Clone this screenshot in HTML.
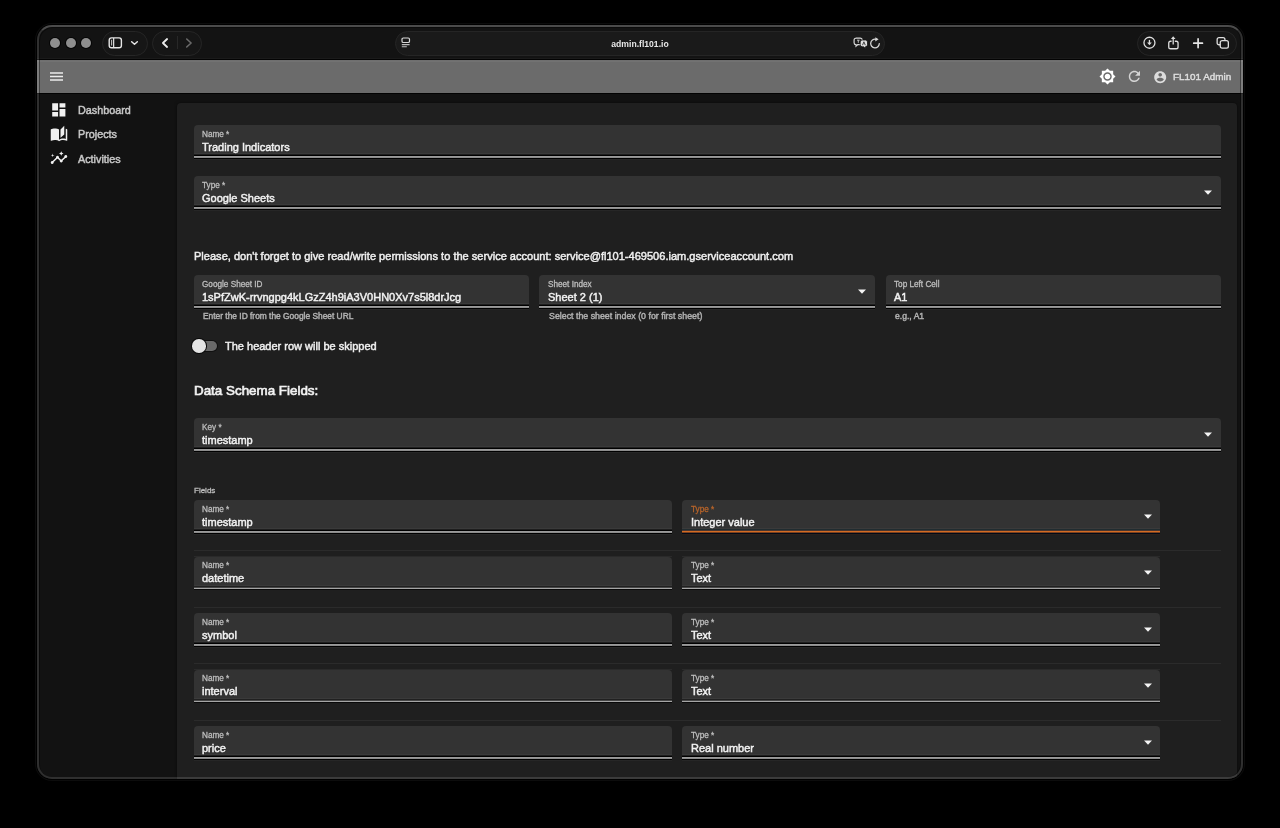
<!DOCTYPE html>
<html><head><meta charset="utf-8">
<style>
html,body{margin:0;padding:0;}
body{font-variant-ligatures:none;width:1280px;height:828px;background:#000;position:relative;overflow:hidden;font-family:"Liberation Sans",sans-serif;}
.t{position:absolute;white-space:nowrap;line-height:1;-webkit-text-stroke:0.45px currentColor;will-change:transform;}
.ic{position:absolute;display:block;}
.win{position:absolute;left:37px;top:25px;width:1206px;height:754px;border-radius:15px;background:#131313;overflow:hidden;box-shadow:0 0 0 1px #000,0 0 0 2px #0c0c0c;}
.winb{position:absolute;left:37px;top:25px;width:1206px;height:754px;border-radius:15px;box-sizing:border-box;border:2px solid rgba(255,255,255,0.125);border-top-color:rgba(255,255,255,0.24);box-shadow:inset 1px 1px 0 rgba(0,0,0,0.4),inset -1px 0 0 rgba(0,0,0,0.4);pointer-events:none;}
.abs{position:absolute;}
.inner{position:absolute;left:-37px;top:-25px;width:1280px;height:828px;}
.pill{position:absolute;box-sizing:border-box;border:1px solid #262626;background:#161616;border-radius:13px;}
.fld{position:absolute;height:30px;background:#333;border-radius:4px 4px 0 0;}
.ul{position:absolute;}
.div{position:absolute;height:1px;background:#2b2b2b;}
</style></head><body>
<div class="win"><div class="inner">
<div class="abs" style="left:37px;top:58px;width:1206px;height:1px;background:#1a1a1a"></div>
<div class="abs" style="left:37px;top:59px;width:1206px;height:1px;background:#030303"></div>
<div class="abs" style="left:50px;top:38px;width:10px;height:10px;border-radius:50%;background:#8e8e8e;box-shadow:0 0 0 1px #050505"></div>
<div class="abs" style="left:65.5px;top:38px;width:10px;height:10px;border-radius:50%;background:#8e8e8e;box-shadow:0 0 0 1px #050505"></div>
<div class="abs" style="left:81px;top:38px;width:10px;height:10px;border-radius:50%;background:#8e8e8e;box-shadow:0 0 0 1px #050505"></div>
<div class="pill" style="left:102px;top:31px;width:46px;height:25px;"></div>
<div class="pill" style="left:152px;top:31px;width:50px;height:25px;"></div>
<div class="pill" style="left:395px;top:31px;width:490px;height:25px;border-radius:12.5px;background:#1a1a1a;border-color:#252525"></div>
<div class="pill" style="left:1137px;top:31px;width:100px;height:25px;"></div>
<svg class="ic" style="left:107px;top:35px" width="16" height="14" viewBox="0 0 16 14"><rect x="2.2" y="2.9" width="12.2" height="9.8" rx="2.3" fill="none" stroke="#e6e6e6" stroke-width="1.4"/><path d="M6.65 2.9v9.8" stroke="#e6e6e6" stroke-width="1.2"/><path d="M4.65 4.8v5.7" stroke="#cfcfcf" stroke-width="1"/></svg>
<svg class="ic" style="left:129px;top:39px" width="10" height="8" viewBox="0 0 10 8"><path d="M2.65 2.75L5.5 5.3 8.35 2.75" fill="none" stroke="#e6e6e6" stroke-width="1.5" stroke-linecap="round" stroke-linejoin="round"/></svg>
<svg class="ic" style="left:158px;top:35px" width="14" height="16" viewBox="0 0 14 16"><path d="M9.1 4L4.9 8l4.2 4" fill="none" stroke="#ececec" stroke-width="1.8" stroke-linecap="round" stroke-linejoin="round"/></svg>
<div class="abs" style="left:177px;top:36px;width:1px;height:13px;background:#282828"></div>
<svg class="ic" style="left:182px;top:35px" width="14" height="16" viewBox="0 0 14 16"><path d="M4.7 4L9.1 8l-4.4 4" fill="none" stroke="#6a6a6a" stroke-width="1.6" stroke-linecap="round" stroke-linejoin="round"/></svg>
<svg class="ic" style="left:400px;top:37px" width="12" height="12" viewBox="0 0 12 12"><rect x="2" y="1" width="7.5" height="4.5" rx="1.3" fill="none" stroke="#d8d8d8" stroke-width="1.2"/><path d="M1.8 7.6h7.8M1.8 9.8h5" stroke="#bdbdbd" stroke-width="1.1"/></svg>
<div class="t" style="left:340.29999999999995px;width:600px;text-align:center;top:39.52px;font-size:8.6px;color:#e8e8e8;font-weight:700;-webkit-text-stroke:0;">admin.fl101.io</div>
<svg class="ic" style="left:853px;top:37px" width="15" height="12" viewBox="0 0 15 12"><path d="M3 1.1h4.2a2 2 0 0 1 2 2v2.6a2 2 0 0 1-2 2H4.6L3 9.2V7.7a2 2 0 0 1-1.9-2V3.1a2 2 0 0 1 2-2z" fill="none" stroke="#d6d6d6" stroke-width="1.2"/><path d="M4 3.2h2.6M5.3 3.2v2.6" stroke="#cfcfcf" stroke-width="0.9"/><path d="M9.2 3h3.3a2 2 0 0 1 2 2v2.8a2 2 0 0 1-2 2h-.2v1.6L10.6 9.8H9.2a2 2 0 0 1-2-2V5a2 2 0 0 1 2-2z" fill="#e0e0e0" stroke="#141414" stroke-width="0.8"/><path d="M9.5 8.2l1.4-3.4 1.4 3.4" fill="none" stroke="#333" stroke-width="0.9"/></svg>
<svg class="ic" style="left:870px;top:37px" width="11" height="12" viewBox="0 0 11 12"><path d="M9.3 6.6A4.3 4.3 0 1 1 5.8 2.3" fill="none" stroke="#d6d6d6" stroke-width="1.3" stroke-linecap="round"/><path d="M5.3 0.2l3.3 2.1-3.3 2.1z" fill="#d6d6d6"/></svg>
<svg class="ic" style="left:1142px;top:35.3px" width="15" height="15" viewBox="0 0 15 15"><circle cx="7.45" cy="7.75" r="5.5" fill="none" stroke="#dedede" stroke-width="1.3"/><path d="M7.45 4.9v3.6" stroke="#dedede" stroke-width="1.3"/><path d="M5.1 7.5h4.7L7.45 10.3z" fill="#dedede"/></svg>
<svg class="ic" style="left:1166px;top:33.5px" width="15" height="16" viewBox="0 0 15 16"><path d="M5.6 7.25H4.6a1.85 1.85 0 0 0-1.85 1.85v3.8a1.85 1.85 0 0 0 1.85 1.85h5.6a1.85 1.85 0 0 0 1.85-1.85V9.1a1.85 1.85 0 0 0-1.85-1.85H8.8" fill="none" stroke="#dedede" stroke-width="1.3"/><path d="M7.2 4.2v6.4" stroke="#dedede" stroke-width="1.3"/><path d="M4.9 5.1h4.6L7.2 2.3z" fill="#dedede"/></svg>
<svg class="ic" style="left:1192px;top:36.5px" width="12" height="12" viewBox="0 0 12 12"><path d="M6.1 1.9v8.7M1.75 6.15h8.7" stroke="#e4e4e4" stroke-width="1.7" stroke-linecap="round"/></svg>
<svg class="ic" style="left:1215px;top:35px" width="16" height="16" viewBox="0 0 16 16"><path d="M5.25 9.75H4a1.85 1.85 0 0 1-1.85-1.85V4.4A1.85 1.85 0 0 1 4 2.55h4.1a1.85 1.85 0 0 1 1.85 1.85v1.15" fill="none" stroke="#dedede" stroke-width="1.3"/><rect x="5.25" y="5.55" width="8.1" height="7.5" rx="1.85" fill="none" stroke="#dedede" stroke-width="1.3"/></svg>
<div class="abs" style="left:37px;top:60px;width:1206px;height:33px;background:#6b6b6b;box-shadow:inset 0 1px 0 #6f6f6f, inset 0 2px 0 #727272"></div>
<div class="abs" style="left:37px;top:93px;width:1206px;height:1px;background:#030303"></div>
<svg class="ic" style="left:48px;top:68px" width="16" height="16" viewBox="0 0 16 16"><path d="M2 5h13M2 8.6h13M2 12h13" stroke="#ececec" stroke-width="1.5"/></svg>
<svg class="ic" style="left:1099px;top:68px" width="17" height="17" viewBox="0 0 24 24"><path fill="#ffffff" d="M20 8.69V4h-4.69L12 .69 8.69 4H4v4.69L.69 12 4 15.31V20h4.69L12 23.31 15.31 20H20v-4.69L23.31 12 20 8.69zM12 18c-3.31 0-6-2.69-6-6s2.69-6 6-6 6 2.69 6 6-2.69 6-6 6zm0-10c-2.21 0-4 1.79-4 4s1.79 4 4 4 4-1.79 4-4-1.79-4-4-4z"/></svg>
<svg class="ic" style="left:1126.3px;top:68.2px" width="16.8" height="16.8" viewBox="0 0 24 24"><path fill="#d4d4d4" d="M17.65 6.35C16.2 4.9 14.21 4 12 4c-4.42 0-7.99 3.58-7.99 8s3.57 8 7.99 8c3.73 0 6.84-2.55 7.73-6h-2.08c-.82 2.33-3.04 4-5.65 4-3.31 0-6-2.69-6-6s2.69-6 6-6c1.66 0 3.14.69 4.22 1.78L13 11h7V4l-2.35 2.35z"/></svg>
<svg class="ic" style="left:1153px;top:69.5px" width="14.4" height="14.4" viewBox="0 0 24 24"><path fill="#dcdcdc" d="M12 2C6.48 2 2 6.48 2 12s4.48 10 10 10 10-4.48 10-10S17.52 2 12 2zm0 3c1.66 0 3 1.34 3 3s-1.34 3-3 3-3-1.34-3-3 1.34-3 3-3zm0 14.2c-2.5 0-4.71-1.28-6-3.22.03-1.99 4-3.08 6-3.08 1.99 0 5.97 1.09 6 3.08-1.29 1.94-3.5 3.22-6 3.22z"/></svg>
<div class="t" style="left:1172.6px;top:71.62px;font-size:9.9px;color:#dedede;font-weight:400;-webkit-text-stroke:0.45px #dedede;">FL101 Admin</div>
<div class="abs" style="left:37px;top:94px;width:1206px;height:700px;background:#121212"></div>
<svg class="ic" style="left:50px;top:101.2px" width="17.6" height="17.6" viewBox="0 0 24 24"><path fill="#f0f0f0" d="M3 13h8V3H3v10zm0 8h8v-6H3v6zm10 0h8V11h-8v10zm0-18v6h8V3h-8z"/></svg>
<svg class="ic" style="left:49.5px;top:125px" width="18" height="18" viewBox="0 0 24 24"><path fill="#f0f0f0" d="M19 1l-5 5v11l5-4.5V1zM1 6v14.65c0 .25.25.5.5.5.1 0 .15-.05.25-.05C3.1 20.45 5.05 20 6.5 20c1.95 0 4.05.4 5.5 1.5V6c-1.45-1.1-3.55-1.5-5.5-1.5S2.45 4.9 1 6zm22 13.5V6c-.6-.45-1.25-.75-2-1v13.5c-1.1-.35-2.3-.5-3.5-.5-1.7 0-4.150.65-5.5 1.5v2c1.35-.85 3.8-1.5 5.5-1.5 1.65 0 3.35.3 4.75 1.05.1.05.15.05.25.05.25 0 .5-.25.5-.5v-1.1z"/></svg>
<svg class="ic" style="left:49.5px;top:148.5px" width="18" height="18" viewBox="0 0 24 24"><path fill="#f0f0f0" d="M21 8c-1.45 0-2.26 1.44-1.930 2.51l-3.55 3.56c-.3-.09-.74-.09-1.04 0l-2.55-2.55C12.27 10.45 11.46 9 10 9c-1.45 0-2.27 1.44-1.93 2.52l-4.56 4.55C2.44 15.74 1 16.55 1 18c0 1.1.9 2 2 2 1.45 0 2.26-1.440 1.93-2.51l4.55-4.56c.3.09.74.09 1.04 0l2.55 2.55C12.73 16.55 13.54 18 15 18c1.45 0 2.27-1.44 1.93-2.52l3.56-3.55c1.07.33 2.51-.48 2.51-1.93 0-1.1-.9-2-2-2zM15 9l.94-2.07L18 6l-2.06-.93L15 3l-.92 2.07L12 6l2.08.93zM3.5 11L4 9l2-.5L4 8l-.5-2L3 8l-2 .5L3 9z"/></svg>
<div class="t" style="left:77.5px;top:104.86px;font-size:10.8px;color:#c8c8c8;font-weight:400;">Dashboard</div>
<div class="t" style="left:77.5px;top:129.16px;font-size:10.8px;color:#c8c8c8;font-weight:400;">Projects</div>
<div class="t" style="left:77.5px;top:153.56px;font-size:10.8px;color:#c8c8c8;font-weight:400;">Activities</div>
<div class="abs" style="left:177px;top:103px;width:1060px;height:700px;background:#1f1f1f;border-radius:4px;box-shadow:0 0 3px rgba(0,0,0,0.55)"></div>
<div class="fld" style="left:193.5px;top:125px;width:1027.5px"></div>
<div class="ul" style="left:193.5px;top:153px;width:1027.5px;background:#3a3a3a;height:1px"></div>
<div class="ul" style="left:193.5px;top:154px;width:1027.5px;background:#1e1e1e;height:1px"></div>
<div class="ul" style="left:193.5px;top:155px;width:1027.5px;background:#000;height:1px"></div>
<div class="ul" style="left:193.5px;top:156px;width:1027.5px;background:#9a9a9a;height:1px"></div>
<div class="ul" style="left:193.5px;top:157px;width:1027.5px;background:#8c8c8c;height:1px"></div>
<div class="ul" style="left:193.5px;top:158px;width:1027.5px;background:#000;height:1px"></div>
<div class="ul" style="left:193.5px;top:159px;width:1027.5px;background:#262626;height:1px"></div>
<div class="t" style="left:202.0px;top:130.81px;font-size:8.2px;color:#bdbdbd;font-weight:400;-webkit-text-stroke:0.3px #bdbdbd;">Name *</div>
<div class="t" style="left:202.0px;top:141.79px;font-size:11px;color:#f2f2f2;font-weight:400;">Trading Indicators</div>
<div class="fld" style="left:193.5px;top:176px;width:1027.5px"></div>
<div class="ul" style="left:193.5px;top:204px;width:1027.5px;background:#3a3a3a;height:1px"></div>
<div class="ul" style="left:193.5px;top:205px;width:1027.5px;background:#1e1e1e;height:1px"></div>
<div class="ul" style="left:193.5px;top:206px;width:1027.5px;background:#000;height:1px"></div>
<div class="ul" style="left:193.5px;top:207px;width:1027.5px;background:#9a9a9a;height:1px"></div>
<div class="ul" style="left:193.5px;top:208px;width:1027.5px;background:#8c8c8c;height:1px"></div>
<div class="ul" style="left:193.5px;top:209px;width:1027.5px;background:#000;height:1px"></div>
<div class="ul" style="left:193.5px;top:210px;width:1027.5px;background:#262626;height:1px"></div>
<div class="t" style="left:202.0px;top:181.81px;font-size:8.2px;color:#bdbdbd;font-weight:400;-webkit-text-stroke:0.3px #bdbdbd;">Type *</div>
<div class="t" style="left:202.0px;top:192.79px;font-size:11px;color:#f2f2f2;font-weight:400;">Google Sheets</div>
<svg class="ic" style="left:1204px;top:189.5px" width="8" height="5" viewBox="0 0 8 5"><path d="M0 0.5h8L4 4.8z" fill="#f4f4f4"/></svg>
<div class="t" style="left:193.75px;top:250.69px;font-size:11px;color:#f0f0f0;font-weight:400;font-size:11.05px">Please, don't forget to give read/write permissions to the service account: service@fl101-469506.iam.gserviceaccount.com</div>
<div class="fld" style="left:193.5px;top:275px;width:335.5px"></div>
<div class="ul" style="left:193.5px;top:303px;width:335.5px;background:#3a3a3a;height:1px"></div>
<div class="ul" style="left:193.5px;top:304px;width:335.5px;background:#1e1e1e;height:1px"></div>
<div class="ul" style="left:193.5px;top:305px;width:335.5px;background:#000;height:1px"></div>
<div class="ul" style="left:193.5px;top:306px;width:335.5px;background:#9a9a9a;height:1px"></div>
<div class="ul" style="left:193.5px;top:307px;width:335.5px;background:#8c8c8c;height:1px"></div>
<div class="ul" style="left:193.5px;top:308px;width:335.5px;background:#000;height:1px"></div>
<div class="ul" style="left:193.5px;top:309px;width:335.5px;background:#262626;height:1px"></div>
<div class="t" style="left:202.0px;top:280.81px;font-size:8.2px;color:#bdbdbd;font-weight:400;-webkit-text-stroke:0.3px #bdbdbd;">Google Sheet ID</div>
<div class="t" style="left:202.0px;top:291.79px;font-size:11px;color:#f2f2f2;font-weight:400;">1sPfZwK-rrvngpg4kLGzZ4h9iA3V0HN0Xv7s5l8drJcg</div>
<div class="fld" style="left:539px;top:275px;width:336px"></div>
<div class="ul" style="left:539px;top:303px;width:336px;background:#3a3a3a;height:1px"></div>
<div class="ul" style="left:539px;top:304px;width:336px;background:#1e1e1e;height:1px"></div>
<div class="ul" style="left:539px;top:305px;width:336px;background:#000;height:1px"></div>
<div class="ul" style="left:539px;top:306px;width:336px;background:#9a9a9a;height:1px"></div>
<div class="ul" style="left:539px;top:307px;width:336px;background:#8c8c8c;height:1px"></div>
<div class="ul" style="left:539px;top:308px;width:336px;background:#000;height:1px"></div>
<div class="ul" style="left:539px;top:309px;width:336px;background:#262626;height:1px"></div>
<div class="t" style="left:547.5px;top:280.81px;font-size:8.2px;color:#bdbdbd;font-weight:400;-webkit-text-stroke:0.3px #bdbdbd;">Sheet Index</div>
<div class="t" style="left:547.5px;top:291.79px;font-size:11px;color:#f2f2f2;font-weight:400;">Sheet 2 (1)</div>
<svg class="ic" style="left:858px;top:288.5px" width="8" height="5" viewBox="0 0 8 5"><path d="M0 0.5h8L4 4.8z" fill="#f4f4f4"/></svg>
<div class="fld" style="left:885.5px;top:275px;width:335.5px"></div>
<div class="ul" style="left:885.5px;top:303px;width:335.5px;background:#3a3a3a;height:1px"></div>
<div class="ul" style="left:885.5px;top:304px;width:335.5px;background:#1e1e1e;height:1px"></div>
<div class="ul" style="left:885.5px;top:305px;width:335.5px;background:#000;height:1px"></div>
<div class="ul" style="left:885.5px;top:306px;width:335.5px;background:#9a9a9a;height:1px"></div>
<div class="ul" style="left:885.5px;top:307px;width:335.5px;background:#8c8c8c;height:1px"></div>
<div class="ul" style="left:885.5px;top:308px;width:335.5px;background:#000;height:1px"></div>
<div class="ul" style="left:885.5px;top:309px;width:335.5px;background:#262626;height:1px"></div>
<div class="t" style="left:894.0px;top:280.81px;font-size:8.2px;color:#bdbdbd;font-weight:400;-webkit-text-stroke:0.3px #bdbdbd;">Top Left Cell</div>
<div class="t" style="left:894.0px;top:291.79px;font-size:11px;color:#f2f2f2;font-weight:400;">A1</div>
<div class="t" style="left:203px;top:311.89px;font-size:8.4px;color:#b0b0b0;font-weight:400;-webkit-text-stroke:0.45px #b0b0b0;">Enter the ID from the Google Sheet URL</div>
<div class="t" style="left:548.75px;top:311.83px;font-size:8.82px;color:#b0b0b0;font-weight:400;-webkit-text-stroke:0.45px #b0b0b0;">Select the sheet index (0 for first sheet)</div>
<div class="t" style="left:894.8px;top:311.92px;font-size:8.6px;color:#b0b0b0;font-weight:400;-webkit-text-stroke:0.45px #b0b0b0;">e.g., A1</div>
<div class="abs" style="left:193px;top:341px;width:24px;height:10px;border-radius:5px;background:#6a6a6a;box-shadow:0 0 0 1px #111"></div>
<div class="abs" style="left:192.2px;top:339.2px;width:13.6px;height:13.6px;border-radius:50%;background:#e4e4e4;box-shadow:0 0 0 1px #0a0a0a"></div>
<div class="t" style="left:225px;top:340.69px;font-size:11px;color:#f0f0f0;font-weight:400;">The header row will be skipped</div>
<div class="t" style="left:193.75px;top:384.36px;font-size:13.4px;color:#f2f2f2;font-weight:400;-webkit-text-stroke:0.65px #f2f2f2;">Data Schema Fields:</div>
<div class="fld" style="left:193.5px;top:418px;width:1027.5px"></div>
<div class="ul" style="left:193.5px;top:446px;width:1027.5px;background:#3a3a3a;height:1px"></div>
<div class="ul" style="left:193.5px;top:447px;width:1027.5px;background:#1e1e1e;height:1px"></div>
<div class="ul" style="left:193.5px;top:448px;width:1027.5px;background:#000;height:1px"></div>
<div class="ul" style="left:193.5px;top:449px;width:1027.5px;background:#9a9a9a;height:1px"></div>
<div class="ul" style="left:193.5px;top:450px;width:1027.5px;background:#8c8c8c;height:1px"></div>
<div class="ul" style="left:193.5px;top:451px;width:1027.5px;background:#000;height:1px"></div>
<div class="ul" style="left:193.5px;top:452px;width:1027.5px;background:#262626;height:1px"></div>
<div class="t" style="left:202.0px;top:423.81px;font-size:8.2px;color:#bdbdbd;font-weight:400;-webkit-text-stroke:0.3px #bdbdbd;">Key *</div>
<div class="t" style="left:202.0px;top:434.79px;font-size:11px;color:#f2f2f2;font-weight:400;">timestamp</div>
<svg class="ic" style="left:1204px;top:431.5px" width="8" height="5" viewBox="0 0 8 5"><path d="M0 0.5h8L4 4.8z" fill="#f4f4f4"/></svg>
<div class="t" style="left:193.8px;top:486.93px;font-size:8px;color:#bdbdbd;font-weight:400;-webkit-text-stroke:0.3px #bdbdbd;">Fields</div>
<div class="fld" style="left:193.5px;top:500px;width:478.20000000000005px"></div>
<div class="ul" style="left:193.5px;top:528px;width:478.20000000000005px;background:#3a3a3a;height:1px"></div>
<div class="ul" style="left:193.5px;top:529px;width:478.20000000000005px;background:#1e1e1e;height:1px"></div>
<div class="ul" style="left:193.5px;top:530px;width:478.20000000000005px;background:#000;height:1px"></div>
<div class="ul" style="left:193.5px;top:531px;width:478.20000000000005px;background:#9a9a9a;height:1px"></div>
<div class="ul" style="left:193.5px;top:532px;width:478.20000000000005px;background:#8c8c8c;height:1px"></div>
<div class="ul" style="left:193.5px;top:533px;width:478.20000000000005px;background:#000;height:1px"></div>
<div class="ul" style="left:193.5px;top:534px;width:478.20000000000005px;background:#262626;height:1px"></div>
<div class="t" style="left:202.0px;top:505.81px;font-size:8.2px;color:#bdbdbd;font-weight:400;-webkit-text-stroke:0.3px #bdbdbd;">Name *</div>
<div class="t" style="left:202.0px;top:516.79px;font-size:11px;color:#f2f2f2;font-weight:400;">timestamp</div>
<div class="fld" style="left:682.3px;top:500px;width:478.20000000000005px"></div>
<div class="ul" style="left:682.3px;top:528px;width:478.20000000000005px;background:#3a3a3a;height:1px"></div>
<div class="ul" style="left:682.3px;top:529px;width:478.20000000000005px;background:#202c30;height:1px"></div>
<div class="ul" style="left:682.3px;top:530px;width:478.20000000000005px;background:#4a3630;height:1px"></div>
<div class="ul" style="left:682.3px;top:531px;width:478.20000000000005px;background:#d46c22;height:1px"></div>
<div class="ul" style="left:682.3px;top:532px;width:478.20000000000005px;background:#7a4020;height:1px"></div>
<div class="ul" style="left:682.3px;top:533px;width:478.20000000000005px;background:#000a18;height:1px"></div>
<div class="ul" style="left:682.3px;top:534px;width:478.20000000000005px;background:#2a201c;height:1px"></div>
<div class="t" style="left:690.8px;top:505.81px;font-size:8.2px;color:#b5632a;font-weight:400;-webkit-text-stroke:0.3px #b5632a;">Type *</div>
<div class="t" style="left:690.8px;top:516.79px;font-size:11px;color:#f2f2f2;font-weight:400;">Integer value</div>
<svg class="ic" style="left:1143.5px;top:513.5px" width="8" height="5" viewBox="0 0 8 5"><path d="M0 0.5h8L4 4.8z" fill="#f4f4f4"/></svg>
<div class="div" style="left:193.5px;top:550px;width:1027.5px"></div>
<div class="fld" style="left:193.5px;top:557px;width:478.20000000000005px;height:29px"></div>
<div class="ul" style="left:193.5px;top:556px;width:478.20000000000005px;background:#2a2a2a;height:1px"></div>
<div class="ul" style="left:193.5px;top:585px;width:478.20000000000005px;background:#3a3a3a;height:1px"></div>
<div class="ul" style="left:193.5px;top:586px;width:478.20000000000005px;background:#202020;height:1px"></div>
<div class="ul" style="left:193.5px;top:587px;width:478.20000000000005px;background:#474747;height:1px"></div>
<div class="ul" style="left:193.5px;top:588px;width:478.20000000000005px;background:#a5a5a5;height:1px"></div>
<div class="ul" style="left:193.5px;top:589px;width:478.20000000000005px;background:#080808;height:1px"></div>
<div class="t" style="left:202.0px;top:562.31px;font-size:8.2px;color:#bdbdbd;font-weight:400;-webkit-text-stroke:0.3px #bdbdbd;">Name *</div>
<div class="t" style="left:202.0px;top:573.29px;font-size:11px;color:#f2f2f2;font-weight:400;">datetime</div>
<div class="fld" style="left:682.3px;top:557px;width:478.20000000000005px;height:29px"></div>
<div class="ul" style="left:682.3px;top:556px;width:478.20000000000005px;background:#2a2a2a;height:1px"></div>
<div class="ul" style="left:682.3px;top:585px;width:478.20000000000005px;background:#3a3a3a;height:1px"></div>
<div class="ul" style="left:682.3px;top:586px;width:478.20000000000005px;background:#202020;height:1px"></div>
<div class="ul" style="left:682.3px;top:587px;width:478.20000000000005px;background:#474747;height:1px"></div>
<div class="ul" style="left:682.3px;top:588px;width:478.20000000000005px;background:#a5a5a5;height:1px"></div>
<div class="ul" style="left:682.3px;top:589px;width:478.20000000000005px;background:#080808;height:1px"></div>
<div class="t" style="left:690.8px;top:562.31px;font-size:8.2px;color:#bdbdbd;font-weight:400;-webkit-text-stroke:0.3px #bdbdbd;">Type *</div>
<div class="t" style="left:690.8px;top:573.29px;font-size:11px;color:#f2f2f2;font-weight:400;">Text</div>
<svg class="ic" style="left:1143.5px;top:570.0px" width="8" height="5" viewBox="0 0 8 5"><path d="M0 0.5h8L4 4.8z" fill="#f4f4f4"/></svg>
<div class="div" style="left:193.5px;top:607px;width:1027.5px"></div>
<div class="fld" style="left:193.5px;top:613px;width:478.20000000000005px"></div>
<div class="ul" style="left:193.5px;top:641px;width:478.20000000000005px;background:#3a3a3a;height:1px"></div>
<div class="ul" style="left:193.5px;top:642px;width:478.20000000000005px;background:#1e1e1e;height:1px"></div>
<div class="ul" style="left:193.5px;top:643px;width:478.20000000000005px;background:#000;height:1px"></div>
<div class="ul" style="left:193.5px;top:644px;width:478.20000000000005px;background:#9a9a9a;height:1px"></div>
<div class="ul" style="left:193.5px;top:645px;width:478.20000000000005px;background:#8c8c8c;height:1px"></div>
<div class="ul" style="left:193.5px;top:646px;width:478.20000000000005px;background:#000;height:1px"></div>
<div class="ul" style="left:193.5px;top:647px;width:478.20000000000005px;background:#262626;height:1px"></div>
<div class="t" style="left:202.0px;top:618.81px;font-size:8.2px;color:#bdbdbd;font-weight:400;-webkit-text-stroke:0.3px #bdbdbd;">Name *</div>
<div class="t" style="left:202.0px;top:629.79px;font-size:11px;color:#f2f2f2;font-weight:400;">symbol</div>
<div class="fld" style="left:682.3px;top:613px;width:478.20000000000005px"></div>
<div class="ul" style="left:682.3px;top:641px;width:478.20000000000005px;background:#3a3a3a;height:1px"></div>
<div class="ul" style="left:682.3px;top:642px;width:478.20000000000005px;background:#1e1e1e;height:1px"></div>
<div class="ul" style="left:682.3px;top:643px;width:478.20000000000005px;background:#000;height:1px"></div>
<div class="ul" style="left:682.3px;top:644px;width:478.20000000000005px;background:#9a9a9a;height:1px"></div>
<div class="ul" style="left:682.3px;top:645px;width:478.20000000000005px;background:#8c8c8c;height:1px"></div>
<div class="ul" style="left:682.3px;top:646px;width:478.20000000000005px;background:#000;height:1px"></div>
<div class="ul" style="left:682.3px;top:647px;width:478.20000000000005px;background:#262626;height:1px"></div>
<div class="t" style="left:690.8px;top:618.81px;font-size:8.2px;color:#bdbdbd;font-weight:400;-webkit-text-stroke:0.3px #bdbdbd;">Type *</div>
<div class="t" style="left:690.8px;top:629.79px;font-size:11px;color:#f2f2f2;font-weight:400;">Text</div>
<svg class="ic" style="left:1143.5px;top:626.5px" width="8" height="5" viewBox="0 0 8 5"><path d="M0 0.5h8L4 4.8z" fill="#f4f4f4"/></svg>
<div class="div" style="left:193.5px;top:663px;width:1027.5px"></div>
<div class="fld" style="left:193.5px;top:670px;width:478.20000000000005px;height:29px"></div>
<div class="ul" style="left:193.5px;top:669px;width:478.20000000000005px;background:#2a2a2a;height:1px"></div>
<div class="ul" style="left:193.5px;top:698px;width:478.20000000000005px;background:#3a3a3a;height:1px"></div>
<div class="ul" style="left:193.5px;top:699px;width:478.20000000000005px;background:#202020;height:1px"></div>
<div class="ul" style="left:193.5px;top:700px;width:478.20000000000005px;background:#474747;height:1px"></div>
<div class="ul" style="left:193.5px;top:701px;width:478.20000000000005px;background:#a5a5a5;height:1px"></div>
<div class="ul" style="left:193.5px;top:702px;width:478.20000000000005px;background:#080808;height:1px"></div>
<div class="t" style="left:202.0px;top:675.31px;font-size:8.2px;color:#bdbdbd;font-weight:400;-webkit-text-stroke:0.3px #bdbdbd;">Name *</div>
<div class="t" style="left:202.0px;top:686.29px;font-size:11px;color:#f2f2f2;font-weight:400;">interval</div>
<div class="fld" style="left:682.3px;top:670px;width:478.20000000000005px;height:29px"></div>
<div class="ul" style="left:682.3px;top:669px;width:478.20000000000005px;background:#2a2a2a;height:1px"></div>
<div class="ul" style="left:682.3px;top:698px;width:478.20000000000005px;background:#3a3a3a;height:1px"></div>
<div class="ul" style="left:682.3px;top:699px;width:478.20000000000005px;background:#202020;height:1px"></div>
<div class="ul" style="left:682.3px;top:700px;width:478.20000000000005px;background:#474747;height:1px"></div>
<div class="ul" style="left:682.3px;top:701px;width:478.20000000000005px;background:#a5a5a5;height:1px"></div>
<div class="ul" style="left:682.3px;top:702px;width:478.20000000000005px;background:#080808;height:1px"></div>
<div class="t" style="left:690.8px;top:675.31px;font-size:8.2px;color:#bdbdbd;font-weight:400;-webkit-text-stroke:0.3px #bdbdbd;">Type *</div>
<div class="t" style="left:690.8px;top:686.29px;font-size:11px;color:#f2f2f2;font-weight:400;">Text</div>
<svg class="ic" style="left:1143.5px;top:683.0px" width="8" height="5" viewBox="0 0 8 5"><path d="M0 0.5h8L4 4.8z" fill="#f4f4f4"/></svg>
<div class="div" style="left:193.5px;top:720px;width:1027.5px"></div>
<div class="fld" style="left:193.5px;top:726px;width:478.20000000000005px"></div>
<div class="ul" style="left:193.5px;top:754px;width:478.20000000000005px;background:#3a3a3a;height:1px"></div>
<div class="ul" style="left:193.5px;top:755px;width:478.20000000000005px;background:#1e1e1e;height:1px"></div>
<div class="ul" style="left:193.5px;top:756px;width:478.20000000000005px;background:#000;height:1px"></div>
<div class="ul" style="left:193.5px;top:757px;width:478.20000000000005px;background:#9a9a9a;height:1px"></div>
<div class="ul" style="left:193.5px;top:758px;width:478.20000000000005px;background:#8c8c8c;height:1px"></div>
<div class="ul" style="left:193.5px;top:759px;width:478.20000000000005px;background:#000;height:1px"></div>
<div class="ul" style="left:193.5px;top:760px;width:478.20000000000005px;background:#262626;height:1px"></div>
<div class="t" style="left:202.0px;top:731.81px;font-size:8.2px;color:#bdbdbd;font-weight:400;-webkit-text-stroke:0.3px #bdbdbd;">Name *</div>
<div class="t" style="left:202.0px;top:742.79px;font-size:11px;color:#f2f2f2;font-weight:400;">price</div>
<div class="fld" style="left:682.3px;top:726px;width:478.20000000000005px"></div>
<div class="ul" style="left:682.3px;top:754px;width:478.20000000000005px;background:#3a3a3a;height:1px"></div>
<div class="ul" style="left:682.3px;top:755px;width:478.20000000000005px;background:#1e1e1e;height:1px"></div>
<div class="ul" style="left:682.3px;top:756px;width:478.20000000000005px;background:#000;height:1px"></div>
<div class="ul" style="left:682.3px;top:757px;width:478.20000000000005px;background:#9a9a9a;height:1px"></div>
<div class="ul" style="left:682.3px;top:758px;width:478.20000000000005px;background:#8c8c8c;height:1px"></div>
<div class="ul" style="left:682.3px;top:759px;width:478.20000000000005px;background:#000;height:1px"></div>
<div class="ul" style="left:682.3px;top:760px;width:478.20000000000005px;background:#262626;height:1px"></div>
<div class="t" style="left:690.8px;top:731.81px;font-size:8.2px;color:#bdbdbd;font-weight:400;-webkit-text-stroke:0.3px #bdbdbd;">Type *</div>
<div class="t" style="left:690.8px;top:742.79px;font-size:11px;color:#f2f2f2;font-weight:400;">Real number</div>
<svg class="ic" style="left:1143.5px;top:739.5px" width="8" height="5" viewBox="0 0 8 5"><path d="M0 0.5h8L4 4.8z" fill="#f4f4f4"/></svg>
</div></div>
<div class="winb"></div>
</body></html>
